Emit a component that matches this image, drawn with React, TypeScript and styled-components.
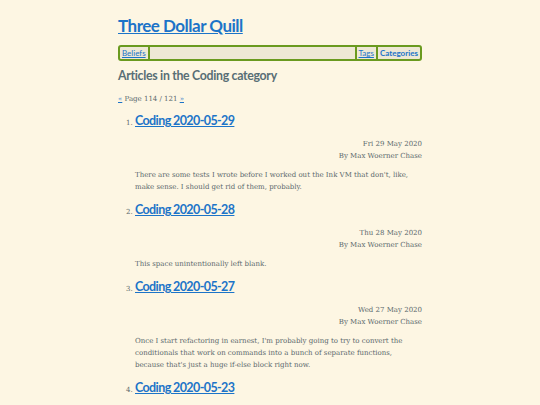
import styled, { createGlobalStyle } from 'styled-components'

const GlobalStyle = createGlobalStyle`
  html, body {
    margin: 0;
    padding: 0;
    background: #fdf6e3;
  }
  body {
    font-family: "DejaVu Serif", serif;
    color: #5a686c;
  }
`

const Page = styled.div`
  width: 304px;
  margin: 0 auto;
  padding-top: 15px;
`

const SiteTitle = styled.h1`
  margin: 0 0 8px;
  font-family: Lato, sans-serif;
  font-size: 17px;
  line-height: 22px;
  font-weight: 700;
  letter-spacing: -0.5px;
  a {
    color: #1c74c8;
  }
`

const Nav = styled.nav`
  display: flex;
  align-items: stretch;
  height: 12px;
  border: 2px solid #6a9a1f;
  border-radius: 3px;
  background: #eee8d5;
  font-family: Lato, sans-serif;
  font-size: 8px;
  line-height: 12px;
`

const NavItem = styled.a<{ $side: 'left' | 'right'; $current?: boolean }>`
  display: block;
  padding: 0 2px;
  color: #1c74c8;
  font-weight: ${p => (p.$current ? 700 : 400)};
  text-decoration: ${p => (p.$current ? 'none' : 'underline')};
  border-${p => (p.$side === 'left' ? 'right' : 'left')}: 2px solid #6a9a1f;
`

const Spacer = styled.div`
  flex: 1;
`

const SectionTitle = styled.h2`
  margin: 7px 0 9px;
  font-family: Lato, sans-serif;
  font-size: 12.3px;
  line-height: 16px;
  font-weight: 700;
  letter-spacing: -0.3px;
  color: #586e75;
`

const Pager = styled.div`
  font-size: 7px;
  line-height: 12px;
  a {
    color: #1c74c8;
  }
`

const Articles = styled.ol`
  margin: 8px 0 0;
  padding-left: 17px;
  li::marker {
    font-size: 7px;
    color: #5a686c;
  }
`

const Article = styled.li`
  margin-bottom: 9px;
`

const ArticleTitle = styled.h3`
  margin: 0 0 9px;
  font-family: Lato, sans-serif;
  font-size: 12.5px;
  line-height: 16px;
  font-weight: 700;
  letter-spacing: -0.6px;
  a {
    color: #1c74c8;
  }
`

const Meta = styled.div`
  text-align: right;
  font-size: 7px;
  line-height: 12px;
  margin-bottom: 7px;
`

const Summary = styled.p`
  margin: 0;
  font-size: 7px;
  line-height: 12px;
`

const articles = [
  {
    title: 'Coding 2020-05-29',
    date: 'Fri 29 May 2020',
    summary:
      "There are some tests I wrote before I worked out the Ink VM that don't, like, make sense. I should get rid of them, probably.",
  },
  {
    title: 'Coding 2020-05-28',
    date: 'Thu 28 May 2020',
    summary: 'This space unintentionally left blank.',
  },
  {
    title: 'Coding 2020-05-27',
    date: 'Wed 27 May 2020',
    summary:
      "Once I start refactoring in earnest, I'm probably going to try to convert the conditionals that work on commands into a bunch of separate functions, because that's just a huge if-else block right now.",
  },
  {
    title: 'Coding 2020-05-23',
    date: 'Sat 23 May 2020',
    summary: 'More work on the Ink VM.',
  },
]

export default function App() {
  return (
    <>
      <GlobalStyle />
      <Page>
        <SiteTitle>
          <a href="#">Three Dollar Quill</a>
        </SiteTitle>
        <Nav>
          <NavItem href="#" $side="left">Beliefs</NavItem>
          <Spacer />
          <NavItem href="#" $side="right">Tags</NavItem>
          <NavItem href="#" $side="right" $current>Categories</NavItem>
        </Nav>
        <SectionTitle>Articles in the Coding category</SectionTitle>
        <Pager>
          <a href="#">«</a> Page 114 / 121 <a href="#">»</a>
        </Pager>
        <Articles>
          {articles.map(a => (
            <Article key={a.title}>
              <ArticleTitle>
                <a href="#">{a.title}</a>
              </ArticleTitle>
              <Meta>
                {a.date}
                <br />
                By Max Woerner Chase
              </Meta>
              <Summary>{a.summary}</Summary>
            </Article>
          ))}
        </Articles>
      </Page>
    </>
  )
}
